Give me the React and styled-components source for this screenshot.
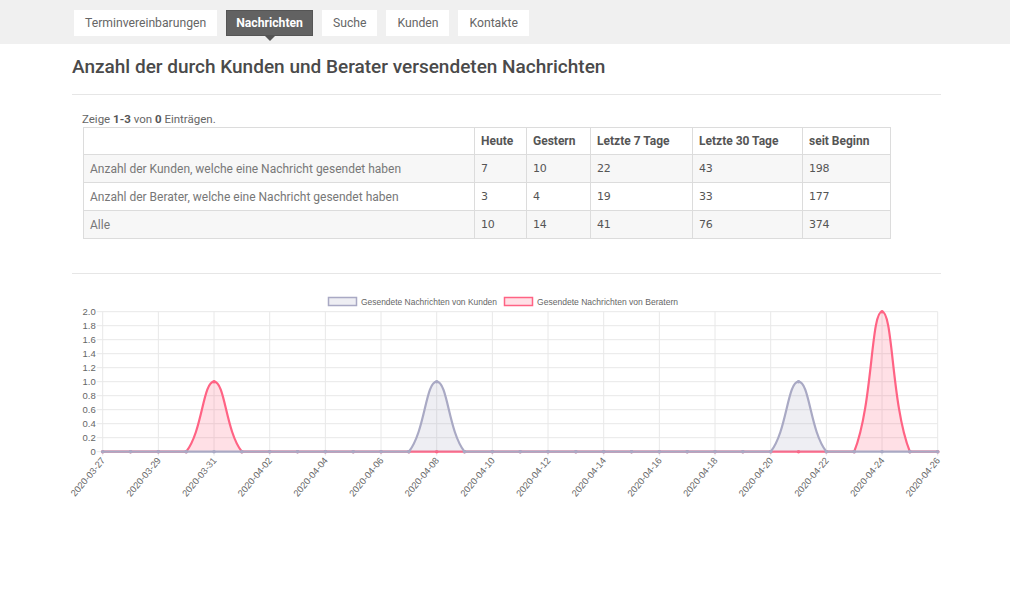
import React from 'react';
import styled, { createGlobalStyle } from 'styled-components';

const GlobalStyle = createGlobalStyle`
  body {
    margin: 0;
    background: #fff;
    font-family: Roboto, "Liberation Sans", Arial, sans-serif;
    color: #555;
  }
`;

const NavBar = styled.nav`
  background: #f0f0f0;
  height: 44px;
  display: flex;
  align-items: flex-start;
  gap: 9px;
  padding: 10px 0 0 74px;
  box-sizing: border-box;
`;

const Tab = styled.div`
  position: relative;
  height: 26px;
  display: flex;
  align-items: center;
  padding: 0 ${p => (p.$active ? '9px' : '10px')};
  font-size: 12.2px;
  background: ${p => (p.$active ? '#626262' : '#fff')};
  color: ${p => (p.$active ? '#fff' : '#666')};
  font-weight: ${p => (p.$active ? 700 : 400)};
  box-sizing: border-box;
  border: 1px solid ${p => (p.$active ? '#555' : '#fff')};

  &::after {
    content: '';
    display: ${p => (p.$active ? 'block' : 'none')};
    position: absolute;
    left: 50%;
    bottom: -6px;
    margin-left: -5px;
    border-left: 5px solid transparent;
    border-right: 5px solid transparent;
    border-top: 5px solid #555;
  }
`;

const Content = styled.main`
  width: 869px;
  margin-left: 72px;
`;

const Title = styled.h1`
  margin: 0;
  padding-top: 12px;
  font-size: 19px;
  line-height: 22px;
  font-weight: 500;
  color: #4a4a4a;
`;

const Rule = styled.hr`
  border: 0;
  border-top: 1px solid #e6e6e6;
  margin: ${p => p.$mt}px 0 0;
`;

const Summary = styled.div`
  margin: 16px 0 0 10px;
  font-size: 11.5px;
  line-height: 16px;
  color: #666;

  b {
    color: #555;
  }
`;

const TableWrap = styled.div`
  padding-left: 11px;
`;

const Table = styled.table`
  border-collapse: collapse;
  width: 807px;
  table-layout: fixed;
  font-size: 12px;

  th, td {
    border: 1px solid #dcdcdc;
    padding: 0 6px;
    text-align: left;
    box-sizing: border-box;
  }

  th {
    height: 27px;
    font-weight: 700;
    color: #555;
  }

  td {
    height: 28px;
  }

  tbody tr:nth-child(odd) {
    background: #f7f7f7;
  }
`;

const LabelCell = styled.td`
  color: #777;
`;

const NumCell = styled.td`
  color: #555;
  font-size: 11px;
  font-family: "DejaVu Sans", "Liberation Sans", sans-serif;
  letter-spacing: -0.3px;
`;

const ChartBox = styled.div`
  margin-top: 12px;
  height: 240px;
`;

const ChartSvg = styled.svg`
  display: block;
  overflow: visible;
  font-family: "Liberation Sans", Arial, Helvetica, sans-serif;
`;

const columns = [
  { label: '', w: 391 },
  { label: 'Heute', w: 52 },
  { label: 'Gestern', w: 64 },
  { label: 'Letzte 7 Tage', w: 102 },
  { label: 'Letzte 30 Tage', w: 110 },
  { label: 'seit Beginn', w: 88 },
];

const rows = [
  ['Anzahl der Kunden, welche eine Nachricht gesendet haben', 7, 10, 22, 43, 198],
  ['Anzahl der Berater, welche eine Nachricht gesendet haben', 3, 4, 19, 33, 177],
  ['Alle', 10, 14, 41, 76, 374],
];

// chart geometry (svg coords)
const L = 30.7;
const R = 865.7;
const T = 25.7;
const B = 165.7;
const DAYS = 31;
const DX = (R - L) / (DAYS - 1);

const yOf = v => B - (v / 2) * (B - T);
const xOf = i => L + i * DX;

function makeSeries(peaks) {
  const arr = new Array(DAYS).fill(0);
  Object.entries(peaks).forEach(([k, v]) => (arr[k] = v));
  return arr;
}

const kunden = makeSeries({ 12: 1, 25: 1 });
const berater = makeSeries({ 4: 1, 28: 2 });

function dateLabel(i) {
  const d = new Date(Date.UTC(2020, 2, 27 + i));
  return d.toISOString().slice(0, 10);
}

const clamp = (v, a, b) => Math.max(a, Math.min(b, v));

function curvePath(data) {
  const pts = data.map((v, i) => ({ x: xOf(i), y: yOf(v) }));
  const t = 0.4;
  const cps = pts.map((cur, i) => {
    const prev = pts[i - 1] || cur;
    const next = pts[i + 1] || cur;
    const d01 = Math.hypot(cur.x - prev.x, cur.y - prev.y);
    const d12 = Math.hypot(next.x - cur.x, next.y - cur.y);
    let s01 = d01 / (d01 + d12);
    let s12 = d12 / (d01 + d12);
    if (isNaN(s01)) s01 = 0;
    if (isNaN(s12)) s12 = 0;
    const fa = t * s01;
    const fb = t * s12;
    return {
      p: { x: clamp(cur.x - fa * (next.x - prev.x), L, R), y: clamp(cur.y - fa * (next.y - prev.y), T, B) },
      n: { x: clamp(cur.x + fb * (next.x - prev.x), L, R), y: clamp(cur.y + fb * (next.y - prev.y), T, B) },
    };
  });
  let d = `M${pts[0].x},${pts[0].y}`;
  for (let i = 1; i < pts.length; i++) {
    d += ` C${cps[i - 1].n.x},${cps[i - 1].n.y} ${cps[i].p.x},${cps[i].p.y} ${pts[i].x},${pts[i].y}`;
  }
  return { d, pts };
}

function Series({ data, stroke, fill }) {
  const { d, pts } = curvePath(data);
  return (
    <g>
      <path d={`${d} L${R},${B} L${L},${B} Z`} fill={fill} />
      <path d={d} fill="none" stroke={stroke} strokeWidth="2.2" />
      {pts.map((p, i) => (
        <circle key={i} cx={p.x} cy={p.y} r="1.8" fill={stroke} />
      ))}
    </g>
  );
}

const GRAY = '#a9a9c4';
const GRAY_FILL = 'rgba(169,169,196,0.2)';
const RED = '#ff6384';
const RED_FILL = 'rgba(255,99,132,0.2)';

function Chart() {
  const yTicks = [];
  for (let v = 0; v <= 10; v++) yTicks.push(v / 5);
  const xTicks = [];
  for (let i = 0; i < DAYS; i += 2) xTicks.push(i);

  return (
    <ChartSvg width="874" height="240">
      {/* legend */}
      <rect x="256.5" y="11.5" width="28" height="8" fill={GRAY_FILL} stroke={GRAY} strokeWidth="1.5" />
      <text x="289" y="18.5" fontSize="9" fill="#666" textLength="136" lengthAdjust="spacingAndGlyphs">
        Gesendete Nachrichten von Kunden
      </text>
      <rect x="432.5" y="11.5" width="28" height="8" fill={RED_FILL} stroke={RED} strokeWidth="1.5" />
      <text x="465" y="18.5" fontSize="9" fill="#666" textLength="141" lengthAdjust="spacingAndGlyphs">
        Gesendete Nachrichten von Beratern
      </text>

      {/* grid */}
      {yTicks.map(v => (
        <g key={v}>
          <line x1={L - 6} x2={R} y1={yOf(v)} y2={yOf(v)} stroke="#e8e8e8" strokeWidth="1" />
          <text x={L - 7} y={yOf(v) + 3.3} fontSize="9.5" fill="#666" textAnchor="end">
            {v === 0 ? '0' : v.toFixed(1)}
          </text>
        </g>
      ))}
      {xTicks.map(i => (
        <g key={i}>
          <line x1={xOf(i)} x2={xOf(i)} y1={T} y2={B + 4} stroke="#e8e8e8" strokeWidth="1" />
          <text
            x={xOf(i) + 3}
            y={B + 9}
            fontSize="9.3"
            fill="#666"
            textAnchor="end"
            transform={`rotate(-50 ${xOf(i) + 3} ${B + 9})`}
          >
            {dateLabel(i)}
          </text>
        </g>
      ))}

      <Series data={berater} stroke={RED} fill={RED_FILL} />
      <Series data={kunden} stroke={GRAY} fill={GRAY_FILL} />
    </ChartSvg>
  );
}

export default function App() {
  const tabs = ['Terminvereinbarungen', 'Nachrichten', 'Suche', 'Kunden', 'Kontakte'];
  return (
    <>
      <GlobalStyle />
      <NavBar>
        {tabs.map(t => (
          <Tab key={t} $active={t === 'Nachrichten'}>{t}</Tab>
        ))}
      </NavBar>
      <Content>
        <Title>Anzahl der durch Kunden und Berater versendeten Nachrichten</Title>
        <Rule $mt={16} />
        <Summary>
          Zeige <b>1-3</b> von <b>0</b> Einträgen.
        </Summary>
        <TableWrap>
          <Table>
            <colgroup>
              {columns.map((c, i) => (
                <col key={i} style={{ width: c.w }} />
              ))}
            </colgroup>
            <thead>
              <tr>
                {columns.map((c, i) => (
                  <th key={i}>{c.label}</th>
                ))}
              </tr>
            </thead>
            <tbody>
              {rows.map(r => (
                <tr key={r[0]}>
                  <LabelCell>{r[0]}</LabelCell>
                  {r.slice(1).map((n, i) => (
                    <NumCell key={i}>{n}</NumCell>
                  ))}
                </tr>
              ))}
            </tbody>
          </Table>
        </TableWrap>
        <Rule $mt={34} />
        <ChartBox>
          <Chart />
        </ChartBox>
      </Content>
    </>
  );
}
